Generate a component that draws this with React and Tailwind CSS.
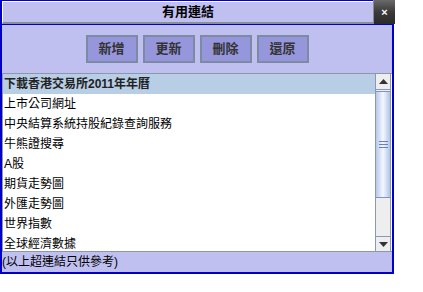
import React from "react";

const rows = [
  "上市公司網址",
  "中央結算系統持股紀錄查詢服務",
  "牛熊證搜尋",
  "A股",
  "期貨走勢圖",
  "外匯走勢圖",
  "世界指數",
  "全球經濟數據",
];

const font = "font-['Liberation_Sans','Noto_Sans_CJK_TC',sans-serif]";

function Btn({ children }) {
  return (
    <div className="w-[52px] h-[28px] flex items-center justify-center bg-[#9696dc] border-2 border-[#7c8aa2] text-[13px] font-bold text-[#333333]">
      {children}
    </div>
  );
}

export default function App() {
  return (
    <div className={`w-[394px] h-[274px] flex flex-col bg-[#c0c0f0] ${font}`}>
      {/* title bar */}
      <div className="flex h-[24px] shrink-0">
        <div className="flex-1 flex flex-col border-t border-l-2 border-[#0000c8]">
          <div className="flex-1 flex items-center justify-center border-t border-l border-white border-b-2 border-b-[#8a8f96] text-[13px] font-bold text-black">
            有用連結
          </div>
        </div>
        <div className="w-[22px] -mr-[1px] flex items-center justify-center bg-gradient-to-b from-[#6a6a6a] via-[#3a3a3a] to-[#2a2a2a] border-l border-[#8a8a8a] text-white text-[11px] font-bold leading-none">
          ×
        </div>
      </div>
      <div className="flex-1 flex flex-col border-t border-x-2 border-b-2 border-[#0000c8] min-h-0">
        {/* buttons */}
        <div className="flex justify-center gap-[5px] pt-[10px] pb-[10px]">
          <Btn>新增</Btn>
          <Btn>更新</Btn>
          <Btn>刪除</Btn>
          <Btn>還原</Btn>
        </div>
        {/* list */}
        <div className="flex-1 min-h-0 flex border-t border-l border-b border-[#8a98a8] bg-white">
          <div className="flex-1 overflow-hidden text-[12px] text-black">
            <div className="h-[20px] leading-[20px] pl-[1px] bg-[#b8cee4] font-bold text-[#222]">
              下載香港交易所2011年年曆
            </div>
            {rows.map((r) => (
              <div key={r} className="h-[20px] leading-[20px] pl-[1px]">
                {r}
              </div>
            ))}
          </div>
          {/* scrollbar */}
          <div className="w-[16px] flex flex-col bg-[#eeeeee] border-l border-r border-[#8a98b8] mr-[1px]">
            <div className="h-[16px] flex items-center justify-center border-b border-[#8a98b8] bg-[#eeeeee]">
              <svg width="9" height="5" viewBox="0 0 9 5">
                <polygon points="0,5 9,5 4.5,0" fill="#333" />
              </svg>
            </div>
            <div className="h-[107px] mt-[1px] flex items-center justify-center border-y border-[#7f93c8] bg-gradient-to-r from-[#b8c8e8] via-[#f4f8ff] to-[#b0c4e8]">
              <div className="flex flex-col gap-[2px]">
                <div className="w-[9px] h-px bg-[#6a80b8]" />
                <div className="w-[9px] h-px bg-[#6a80b8]" />
                <div className="w-[9px] h-px bg-[#6a80b8]" />
              </div>
            </div>
            <div className="flex-1" />
            <div className="h-[15px] flex items-center justify-center border-t border-[#8a98b8] bg-[#eeeeee]">
              <svg width="9" height="5" viewBox="0 0 9 5">
                <polygon points="0,0 9,0 4.5,5" fill="#333" />
              </svg>
            </div>
          </div>
        </div>
        {/* status */}
        <div className="h-[20px] shrink-0 flex items-center text-[12px] text-black pl-0">
          (以上超連結只供參考)
        </div>
      </div>
    </div>
  );
}
